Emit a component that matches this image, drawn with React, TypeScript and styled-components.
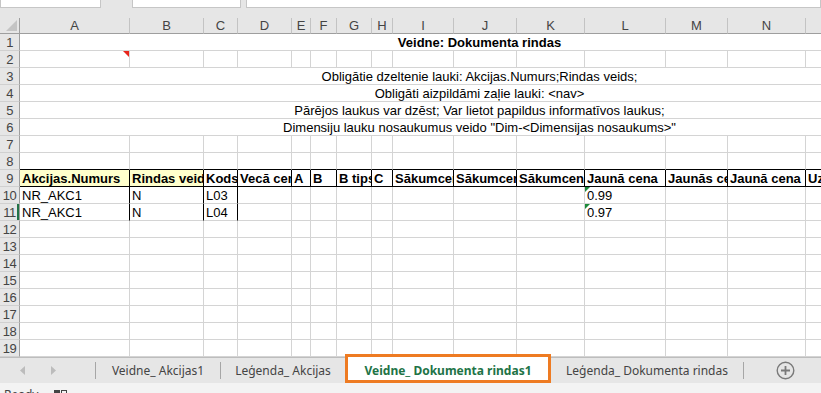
import React from 'react';
import styled, { createGlobalStyle } from 'styled-components';

const GlobalStyle = createGlobalStyle`
  html, body { margin: 0; padding: 0; background: #ffffff; }
  body { font-family: "Liberation Sans", Arial, sans-serif; }
`;

// column widths A..P (P is past the window edge, it only widens the merged rows)
const COLS = [110, 74, 34, 54, 19, 26, 35, 21, 61, 63, 68, 81, 62, 78, 80, 54];
const LETTERS = 'ABCDEFGHIJKLMNOP'.split('');
const ROWS = Array.from({ length: 19 }, (_, i) => i + 1);

const HEAD = [
  'Akcijas.Numurs', 'Rindas veids', 'Kods', 'Vecā cena', 'A', 'B', 'B tips', 'C',
  'Sākumcena', 'Sākumcena', 'Sākumcena', 'Jaunā cena', 'Jaunās cenas', 'Jaunā cena', 'Uz', '',
];

const DATA: Record<number, Record<number, string>> = {
  10: { 0: 'NR_AKC1', 1: 'N', 2: 'L03', 11: '0.99' },
  11: { 0: 'NR_AKC1', 1: 'N', 2: 'L04', 11: '0.97' },
};

const MERGED: Record<number, { text: string; bold?: boolean }> = {
  1: { text: 'Veidne: Dokumenta rindas', bold: true },
  3: { text: 'Obligātie dzeltenie lauki: Akcijas.Numurs;Rindas veids;' },
  4: { text: 'Obligāti aizpildāmi zaļie lauki: <nav>' },
  5: { text: 'Pārējos laukus var dzēst; Var lietot papildus informatīvos laukus;' },
  6: { text: 'Dimensiju lauku nosaukumus veido "Dim-<Dimensijas nosaukums>"' },
};

const Window = styled.div`
  width: 821px;
  height: 393px;
  overflow: hidden;
  display: flex;
  flex-direction: column;
  background: #e6e6e6;
`;

const FormulaStrip = styled.div`
  height: 18px;
  flex-shrink: 0;
  display: flex;
  align-items: flex-start;
`;

const FormulaBox = styled.div<{ $w?: number; $gap?: number }>`
  box-sizing: border-box;
  height: 8px;
  width: ${p => (p.$w ? `${p.$w}px` : 'auto')};
  flex: ${p => (p.$w ? '0 0 auto' : '1')};
  margin-left: ${p => p.$gap || 0}px;
  background: #ffffff;
  border: 1px solid #c6c6c6;
  border-top: none;
`;

const SheetArea = styled.div`
  flex: 1;
  overflow: hidden;
`;

const Grid = styled.div`
  display: grid;
  grid-template-columns: 20px ${COLS.map(c => `${c}px`).join(' ')};
  grid-template-rows: 16px;
  grid-auto-rows: 17px;
  width: ${20 + COLS.reduce((a, b) => a + b, 0)}px;
  background: #ffffff;
`;

const Corner = styled.div`
  position: relative;
  box-sizing: border-box;
  background: #e6e6e6;
  border-right: 1px solid #9e9e9e;
  border-bottom: 1px solid #9e9e9e;
`;

const ColHead = styled.div`
  box-sizing: border-box;
  background: #e6e6e6;
  border-right: 1px solid #c3c3c3;
  border-bottom: 1px solid #9e9e9e;
  padding-top: 1px;
  color: #444444;
  font-size: 13px;
  line-height: 14px;
  text-align: center;
  overflow: hidden;
`;

const RowHead = styled.div<{ $active?: boolean }>`
  box-sizing: border-box;
  background: #e6e6e6;
  border-right: 1px solid #9e9e9e;
  border-bottom: 1px solid #d0d0d0;
  box-shadow: ${p => (p.$active ? 'inset -2px 0 0 #217346' : 'none')};
  padding-top: 1px;
  color: #444444;
  font-size: 13px;
  line-height: 15px;
  text-align: center;
  letter-spacing: -0.5px;
  overflow: hidden;
`;

const Cell = styled.div<{
  $bold?: boolean;
  $fill?: string;
  $center?: boolean;
  $edge?: boolean;
  $under?: boolean;
  $span?: number;
}>`
  position: relative;
  box-sizing: border-box;
  grid-column: span ${p => p.$span || 1};
  background: ${p => p.$fill || '#ffffff'};
  border-right: 1px solid ${p => (p.$edge ? '#000000' : '#d4d4d4')};
  border-bottom: 1px solid ${p => (p.$under ? '#000000' : '#d4d4d4')};
  padding: 2px 2px 0;
  color: #000000;
  font-size: 13px;
  line-height: 14px;
  font-weight: ${p => (p.$bold ? 700 : 400)};
  text-align: ${p => (p.$center ? 'center' : 'left')};
  white-space: nowrap;
  overflow: hidden;
`;

const CommentMark = styled.span`
  position: absolute;
  top: 0;
  right: 0;
  width: 0;
  height: 0;
  border-top: 6px solid #e8251c;
  border-left: 6px solid transparent;
`;

const ErrorMark = styled.span`
  position: absolute;
  top: 0;
  left: 0;
  width: 0;
  height: 0;
  border-top: 5px solid #1c8a3a;
  border-right: 5px solid transparent;
`;

const TabBar = styled.div`
  height: 26px;
  flex-shrink: 0;
  display: flex;
  align-items: center;
  background: #e6e6e6;
  border-top: 1px solid #bdbdbd;
  box-sizing: border-box;
  font-family: "Noto Sans", "Open Sans", sans-serif;
  font-size: 12px;
  color: #444444;
`;

const NavArrows = styled.div`
  width: 95px;
  display: flex;
  align-items: center;
  gap: 24px;
  padding-left: 20px;
  box-sizing: border-box;
`;

const Divider = styled.div`
  width: 1px;
  height: 17px;
  background: #a6a6a6;
`;

const Tab = styled.div<{ $w: number }>`
  width: ${p => p.$w}px;
  height: 100%;
  display: flex;
  align-items: center;
  justify-content: center;
  white-space: nowrap;
`;

const ActiveTab = styled.div`
  position: relative;
  width: 200px;
  margin: 0 3px;
  align-self: stretch;
  margin-top: -1px;
  display: flex;
  align-items: center;
  justify-content: center;
  background: #ffffff;
  color: #217346;
  font-weight: 700;
  white-space: nowrap;

  &::after {
    content: '';
    position: absolute;
    left: -3px;
    right: -3px;
    top: -3px;
    bottom: 0;
    border: 3px solid #ee7b22;
    pointer-events: none;
  }
`;

const AddSlot = styled.div`
  flex: 1;
  display: flex;
  align-items: center;
  padding-left: 32px;
`;

const StatusBar = styled.div`
  height: 10px;
  flex-shrink: 0;
  overflow: hidden;
  display: flex;
  align-items: flex-start;
  gap: 16px;
  padding: 5px 0 0 4px;
  box-sizing: border-box;
  background: #f3f3f3;
  font-family: "Noto Sans", "Open Sans", sans-serif;
  font-size: 12px;
  line-height: 14px;
  color: #444444;
`;

const Arrow = ({ left }: { left?: boolean }) => (
  <svg width="6" height="9" viewBox="0 0 6 9">
    <path d={left ? 'M5 0 L0 4.5 L5 9 Z' : 'M1 0 L6 4.5 L1 9 Z'} fill="#bcbcbc" />
  </svg>
);

const PlusCircle = () => (
  <svg width="19" height="19" viewBox="0 0 19 19">
    <circle cx="9.5" cy="9.5" r="8.3" fill="none" stroke="#7a7a7a" strokeWidth="1.4" />
    <path d="M9.5 5 V14 M5 9.5 H14" stroke="#7a7a7a" strokeWidth="1.8" />
  </svg>
);

const SelectAll = () => (
  <svg width="11" height="11" viewBox="0 0 11 11" style={{ position: 'absolute', right: 2, bottom: 2 }}>
    <path d="M11 0 L11 11 L0 11 Z" fill="#c4c4c4" />
  </svg>
);

const MacroIcon = () => (
  <svg width="14" height="10" viewBox="0 0 14 10" style={{ marginTop: 1 }}>
    <rect x="0" y="1" width="6" height="9" fill="#444444" />
    <rect x="7.5" y="1.5" width="5" height="8" fill="none" stroke="#444444" />
  </svg>
);

function renderRow(n: number) {
  const cells: React.ReactNode[] = [
    <RowHead key="h" $active={n === 11}>{n}</RowHead>,
  ];
  const merged = MERGED[n];
  if (merged) {
    cells.push(
      <Cell key="m" $span={COLS.length} $center $bold={merged.bold}>
        {merged.text}
      </Cell>
    );
    return cells;
  }
  COLS.forEach((_, c) => {
    const inTable = c < 15;
    if (n === 9) {
      cells.push(
        <Cell key={c} $bold $edge={inTable} $under={inTable} $fill={c < 2 ? '#ffffcc' : undefined}>
          {HEAD[c]}
        </Cell>
      );
      return;
    }
    const value = DATA[n]?.[c];
    cells.push(
      <Cell key={c} $under={n === 8 && inTable} $edge={(n === 10 || n === 11) && c < 3}>
        {n === 2 && c === 0 && <CommentMark />}
        {c === 11 && value && <ErrorMark />}
        {value}
      </Cell>
    );
  });
  return cells;
}

export default function App() {
  return (
    <>
      <GlobalStyle />
      <Window>
        <FormulaStrip>
          <FormulaBox $w={101} />
          <FormulaBox $w={109} $gap={31} />
          <FormulaBox $gap={5} />
        </FormulaStrip>

        <SheetArea>
          <Grid>
            <Corner>
              <SelectAll />
            </Corner>
            {LETTERS.map(l => (
              <ColHead key={l}>{l}</ColHead>
            ))}
            {ROWS.map(n => renderRow(n))}
          </Grid>
        </SheetArea>

        <TabBar>
          <NavArrows>
            <Arrow left />
            <Arrow />
          </NavArrows>
          <Divider />
          <Tab $w={124}>Veidne_ Akcijas1</Tab>
          <Divider />
          <Tab $w={124}>Leģenda_ Akcijas</Tab>
          <ActiveTab>Veidne_ Dokumenta rindas1</ActiveTab>
          <Tab $w={192}>Leģenda_ Dokumenta rindas</Tab>
          <Divider />
          <AddSlot>
            <PlusCircle />
          </AddSlot>
        </TabBar>

        <StatusBar>
          <span>Ready</span>
          <MacroIcon />
        </StatusBar>
      </Window>
    </>
  );
}
